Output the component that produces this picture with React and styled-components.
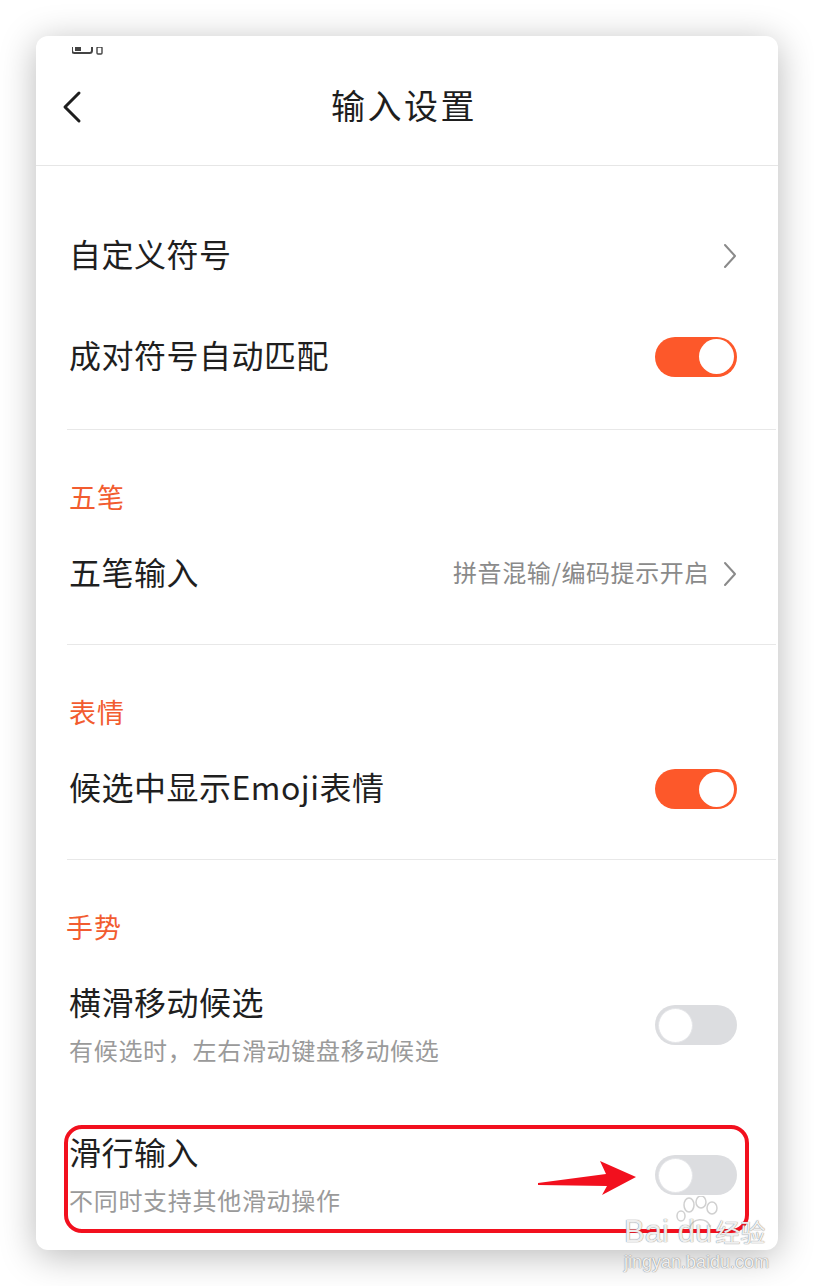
import React from "react";
import styled, { createGlobalStyle } from "styled-components";

const Global = createGlobalStyle`
  html, body { margin: 0; padding: 0; background: #ffffff; }
  body { font-family: "Noto Sans CJK SC", "Noto Sans", sans-serif; }
  * { box-sizing: border-box; }
`;

const Page = styled.div`
  position: relative;
  width: 814px;
  height: 1286px;
  padding: 36px 36px 0 36px;
  background: #ffffff;
  overflow: hidden;
`;

const Card = styled.div`
  position: relative;
  width: 742px;
  height: 1214px;
  background: #ffffff;
  border-radius: 12px;
  box-shadow: 0 6px 36px rgba(0, 0, 0, 0.28);
  overflow: hidden;
  display: flex;
  flex-direction: column;
  & > * { flex-shrink: 0; }
`;

const StatusFrag = styled.div`
  position: absolute;
  left: 36px;
  top: 0;
`;

const Header = styled.header`
  height: 130px;
  padding-top: 13px;
  display: grid;
  grid-template-columns: 1fr auto 1fr;
  align-items: center;
  border-bottom: 1px solid #e6e6e6;
`;

const BackBtn = styled.div`
  padding-left: 24px;
  display: flex;
  align-items: center;
`;

const Title = styled.h1`
  margin: 0 0 6px -6px;
  font-size: 34px;
  font-weight: 400;
  letter-spacing: 2.5px;
  color: #1e1e1e;
`;

const Group = styled.section`
  padding: ${(p) => p.$top || 0}px 0 ${(p) => p.$bottom || 0}px;
`;

const Divider = styled.div`
  height: 1px;
  background: #e8e8e8;
  margin: 0 2px 0 31px;
`;

const SectionTitle = styled.div`
  padding: 50px 0 0 ${(p) => p.$indent || 33}px;
  height: 84px;
  line-height: 34px;
  margin-bottom: 10px;
  font-size: 27px;
  letter-spacing: 1px;
  color: #f25c30;
`;

const Row = styled.div`
  height: ${(p) => p.$h || 100}px;
  display: flex;
  align-items: center;
  justify-content: space-between;
  padding: 0 41px 0 33px;
`;

const SubRow = styled.div`
  display: flex;
  align-items: center;
  justify-content: space-between;
  padding: 30px 41px 38px 33px;
`;

const TextCol = styled.div`
  display: flex;
  flex-direction: column;
  gap: 10px;
`;

const Label = styled.div`
  font-size: 32px;
  line-height: 40px;
  letter-spacing: 0.5px;
  color: #1f1f1f;
`;

const RowLabel = styled(Label)`
  margin-bottom: 6px;
`;

const SubTitle = styled(Label)`
  margin-top: -3px;
  margin-bottom: 3px;
`;

const Sub = styled.div`
  font-size: 24px;
  line-height: 32px;
  letter-spacing: 0.7px;
  color: #9a9a9a;
`;

const Right = styled.div`
  display: flex;
  align-items: center;
  gap: 14px;
`;

const Value = styled.span`
  font-size: 24px;
  letter-spacing: 0.6px;
  color: #8a8a8a;
  margin-bottom: 5px;
`;

const Track = styled.div`
  width: 82px;
  height: 40px;
  border-radius: 20px;
  background: ${(p) => (p.$on ? "#fd582a" : "#dcdde0")};
  display: flex;
  align-items: center;
  justify-content: ${(p) => (p.$on ? "flex-end" : "flex-start")};
  padding: 0 3px;
`;

const Knob = styled.div`
  width: 35px;
  height: 35px;
  border-radius: 50%;
  background: #ffffff;
  border: ${(p) => (p.$on ? "none" : "1.5px solid #e4e5e8")};
`;

const Annotation = styled.div`
  position: absolute;
  left: 28px;
  top: 1089px;
  width: 685px;
  height: 108px;
  border: 4.5px solid #f2101e;
  border-radius: 18px;
  pointer-events: none;
`;

const ArrowSvg = styled.svg`
  position: absolute;
  left: 500px;
  top: 1120px;
`;

const Watermark = styled.div`
  position: absolute;
  left: 624px;
  top: 1196px;
  width: 160px;
  color: rgba(255, 255, 255, 0.9);
  font-family: "Liberation Sans", "Noto Sans CJK SC", sans-serif;
  text-shadow: 0 0 1px rgba(110, 110, 110, 0.7), 0 0 1px rgba(110, 110, 110, 0.7);
  pointer-events: none;
`;

const WmMain = styled.div`
  display: flex;
  align-items: baseline;
  font-size: 31px;
  line-height: 30px;
  margin-top: 20px;
`;

const WmDu = styled.span`
  margin-left: 9px;
`;

const WmCn = styled.span`
  margin-left: 3px;
  font-family: "Noto Sans CJK SC", sans-serif;
  font-size: 25px;
`;

const WmUrl = styled.div`
  font-size: 18px;
  line-height: 20px;
  margin-top: 5px;
`;

const PawWrap = styled.div`
  position: absolute;
  left: 52px;
  top: 0px;
`;

const Chevron = ({ color = "#8a8a8a" }) => (
  <svg width="14" height="26" viewBox="0 0 14 26">
    <path d="M2 2 L12 13 L2 24" fill="none" stroke={color} strokeWidth="2" strokeLinecap="round" strokeLinejoin="round" />
  </svg>
);

const Toggle = ({ on }) => (
  <Track $on={on}>
    <Knob $on={on} />
  </Track>
);

export default function App() {
  return (
    <Page>
      <Global />
      <Card>
        <StatusFrag>
          <svg width="40" height="8" viewBox="0 0 40 8">
            <rect x="0" y="-4" width="20" height="10" rx="2.5" fill="none" stroke="#444" strokeWidth="2" />
            <rect x="3" y="0" width="6" height="4" fill="#444" />
            <rect x="25" y="0" width="5" height="7" rx="1" fill="none" stroke="#444" strokeWidth="1.4" />
          </svg>
        </StatusFrag>
        <Header>
          <BackBtn>
            <svg width="24" height="34" viewBox="0 0 24 34">
              <path d="M19 3 L5 17 L19 31" fill="none" stroke="#1e1e1e" strokeWidth="3" strokeLinecap="round" strokeLinejoin="round" />
            </svg>
          </BackBtn>
          <Title>输入设置</Title>
          <div />
        </Header>

        <Group $top={39} $bottom={22}>
          <Row $h={101}>
            <RowLabel>自定义符号</RowLabel>
            <Chevron />
          </Row>
          <Row $h={101}>
            <RowLabel>成对符号自动匹配</RowLabel>
            <Toggle on />
          </Row>
        </Group>
        <Divider />

        <Group $bottom={20}>
          <SectionTitle>五笔</SectionTitle>
          <Row>
            <RowLabel>五笔输入</RowLabel>
            <Right>
              <Value>拼音混输/编码提示开启</Value>
              <Chevron />
            </Right>
          </Row>
        </Group>
        <Divider />

        <Group $bottom={20}>
          <SectionTitle>表情</SectionTitle>
          <Row>
            <RowLabel>候选中显示Emoji表情</RowLabel>
            <Toggle on />
          </Row>
        </Group>
        <Divider />

        <Group>
          <SectionTitle $indent={30}>手势</SectionTitle>
          <SubRow>
            <TextCol>
              <SubTitle>横滑移动候选</SubTitle>
              <Sub>有候选时，左右滑动键盘移动候选</Sub>
            </TextCol>
            <Toggle />
          </SubRow>
          <SubRow>
            <TextCol>
              <SubTitle>滑行输入</SubTitle>
              <Sub>不同时支持其他滑动操作</Sub>
            </TextCol>
            <Toggle />
          </SubRow>
        </Group>

        <Annotation />
      </Card>

      <ArrowSvg width="140" height="80" viewBox="500 1120 140 80">
        <polygon
          points="538,1183 606,1174 600,1161 636,1177 602,1195 607,1186 538,1185"
          fill="#f2101e"
        />
      </ArrowSvg>

      <Watermark>
        <PawWrap>
          <svg width="46" height="34" viewBox="0 0 46 34">
            <g fill="none" stroke="rgba(150,150,150,0.45)" strokeWidth="1.5">
              <ellipse cx="13" cy="9" rx="5" ry="7" />
              <ellipse cx="25" cy="6" rx="5" ry="6" />
              <ellipse cx="36" cy="12" rx="5" ry="6" />
              <ellipse cx="5" cy="20" rx="4" ry="5" />
              <path d="M14 33 C14 22 32 20 34 31" />
            </g>
          </svg>
        </PawWrap>
        <WmMain>
          <span>Bai</span>
          <WmDu>du</WmDu>
          <WmCn>经验</WmCn>
        </WmMain>
        <WmUrl>jingyan.baidu.com</WmUrl>
      </Watermark>
    </Page>
  );
}
